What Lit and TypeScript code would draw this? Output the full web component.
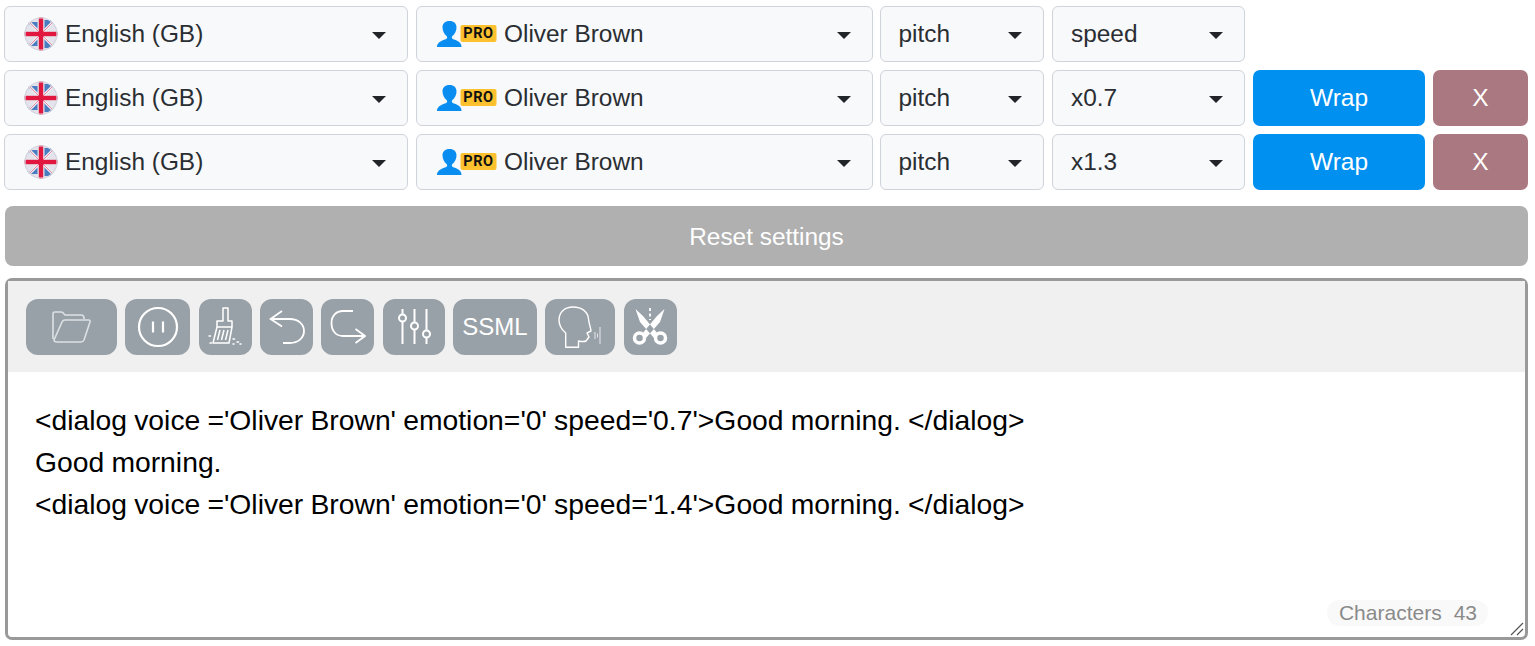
import { LitElement, html, css, svg } from "lit";
import { customElement } from "lit/decorators.js";

const flag = svg`<svg class="flag" viewBox="0 0 34 34" width="34" height="34">
  <defs><clipPath id="c"><circle cx="17" cy="17" r="16.5"/></clipPath></defs>
  <g clip-path="url(#c)">
    <rect width="34" height="34" fill="#e4e2ea"/>
    <path d="M2 5 L13.500 5 L13.500 14 Z M20.500 3 L31 3 L20.500 14 Z M2 29 L13.500 29 L13.500 20 Z M20.500 31 L31 31 L20.500 20 Z" fill="#4a7cc0"/>
    <path d="M2 2 L32 32 M32 2 L2 32" stroke="#f1edf2" stroke-width="3"/>
    <path d="M4 4 L30 30 M30 4 L4 30" stroke="#e48aa0" stroke-width="1"/>
    <rect x="14.800" width="4.400" height="34" fill="#e2173f"/>
    <rect y="14.800" width="34" height="4.400" fill="#e2173f"/>
  </g>
  <circle cx="17" cy="17" r="16" fill="none" stroke="#d4d5e0" stroke-width="1.200"/></svg>`;

const pro = svg`<svg class="pro" viewBox="0 0 60 26" width="60" height="26">
  <path d="M0 26 C0 22 3.500 20 8 18.500 C10 17.800 10.500 16.800 10 15.500 C7 13 5.500 9.500 5.500 6.500 C5.500 2.500 8 0 12.500 0 C17 0 19.500 2.500 19.500 6.500 C19.500 9.500 18 13 15 15.500 C14.500 16.800 15 17.800 17 18.500 C21.500 20 24.500 22 24.500 26 Z" fill="#0a8df0"/>
  <rect x="23.500" y="4" width="36" height="17" rx="2" fill="#fdc02f"/>
</svg>`;

const icons = {
  folder: svg`<svg viewBox="0 0 42 36" width="42" height="36" fill="none" stroke="#dde1e4" stroke-width="1.600" stroke-linejoin="round"><path d="M2 30 V5 Q2 3 4 3 H10 Q12 3 13 5 L14 6 H30 Q33 6 33 9 V10"/><path d="M6 33 H30 Q32 33 33 31 L39 13 Q39.500 11 37.500 11 H14 Q12 11 11 13 L3 31 Q3 33 6 33 Z"/></svg>`,
  pause: svg`<svg viewBox="0 0 42 42" width="42" height="42" fill="none" stroke="#fff" stroke-width="2.200"><circle cx="21" cy="21" r="19"/><path d="M16 15.500 V26.500 M26 15.500 V26.500"/></svg>`,
  broom: svg`<svg viewBox="0 0 34 40" width="34" height="40" fill="none" stroke="#fff" stroke-width="1.500" stroke-linejoin="round"><path d="M15 1 H20 V14 H24 V20 L21 36 H5 L9 20 V14 H15 Z"/><path d="M9 20 H24 M12 23 L9.500 33 M16 23 L13.500 33 M20 23 L17.500 33"/><path d="M1 29 h1.500 M2 36 h1.500 M25 32 h1.500 M29 35 h1.500 M32 37 h1 M25 37 h1" stroke-linecap="round"/></svg>`,
  undo: svg`<svg viewBox="0 0 36 36" width="36" height="36" fill="none" stroke="#fff" stroke-width="1.800"><path d="M13 2 L1.500 10 L13 17.500 M1.500 10 H21 C29 10 35 15 35 22 C35 29 29 34 21 34 H14"/></svg>`,
  redo: svg`<svg viewBox="0 0 36 36" width="36" height="36" fill="none" stroke="#fff" stroke-width="1.800"><path d="M25.500 20 L35 27 L25.500 34 M35 27 H13 C6 27 1.500 22 1.500 14 C1.500 7 6 2 13 2 H23"/></svg>`,
  sliders: svg`<svg viewBox="0 0 36 38" width="36" height="38" fill="none" stroke="#fff" stroke-width="2"><path d="M6.500 1 V6.500 M6.500 13.500 V36 M18.500 1 V14.500 M18.500 21.500 V36 M30.500 1 V22.500 M30.500 29.500 V36"/><circle cx="6.500" cy="10" r="3.500"/><circle cx="18.500" cy="18" r="3.500"/><circle cx="30.500" cy="26" r="3.500"/></svg>`,
  head: svg`<svg viewBox="0 0 44 42" width="44" height="42" fill="none" stroke="#fff" stroke-width="1.400" stroke-linejoin="round"><path d="M7.700 41.300 V27 C3 23 1 19 1 14 C1 6 7 1 15 1 C24 1 30 6 30.500 13 C30.800 17 33 23 33 25 L29 27 L31 31 L28 35 C26 36 23 35.500 20.500 35 V41.300 Z"/><path d="M37 26 V33 M42 21 V38" stroke-width="1.100" stroke="#dfe3e6"/><path d="M39.500 27.500 V31.500" stroke-width="1" stroke="#dfe3e6"/></svg>`,
  scissors: svg`<svg viewBox="0 0 36 38" width="36" height="38" fill="none" stroke="#fff"><path d="M3.500 1 L11 8 L26 26 L22 30 L8 14 Z M32.500 1 L25 8 L10 26 L14 30 L28 14 Z" fill="#fff" stroke="none"/><circle cx="7.500" cy="30" r="5" stroke-width="3.500"/><circle cx="28.500" cy="30" r="5" stroke-width="3.500"/><path d="M18 0 V12" stroke-width="1.800" stroke-dasharray="3 2.500"/></svg>`,
};

@customElement("app-root")
export class AppRoot extends LitElement {
  static styles = css`
    :host { display: block; width: 1535px; height: 646px; background: #fff; font-family: "Liberation Sans", Arial, sans-serif; overflow: hidden; }
    .page { padding: 6px 7px 0 4px; display: flex; flex-direction: column; }
    .rows { display: flex; flex-direction: column; gap: 8px; }
    .row { display: flex; gap: 8px; height: 56px; }
    .sel { box-sizing: border-box; height: 56px; background: #f8f9fa; border: 1px solid #ced4da; border-radius: 6px; display: flex; align-items: center; padding-left: 19px; font-size: 24.400px; color: #2a2e33; position: relative; flex: none; }
    .sel::after { content: ""; position: absolute; top: 25px; right: 21px; border-left: 7.500px solid transparent; border-right: 7.500px solid transparent; border-top: 7px solid #212529; }
    .w1 { width: 404px; }
    .w2 { width: 457px; }
    .w3 { width: 164px; margin-left: -1px; padding-left: 17.500px; }
    .w4 { width: 193px; padding-left: 18px; }
    .lang { padding-left: 19px; gap: 7px; }
    .voice { gap: 7px; padding-left: 20px; }
    .flag { flex: none; filter: blur(0.4px); }
    .pro-wrap { position: relative; display: block; width: 60px; height: 26px; flex: none; }
    .pro { display: block; }
    .pro-text { position: absolute; left: 24px; top: 4.500px; width: 35px; text-align: center; font: 700 14.500px/16px "Roboto", sans-serif; letter-spacing: 0.600px; color: #111; }
    .btn { box-sizing: border-box; height: 56px; border-radius: 7px; display: flex; align-items: center; justify-content: center; color: #fff; font-size: 24.500px; flex: none; }
    .wrap { width: 172px; background: #0090f0; }
    .x { width: 95px; background: #aa7880; }
    .reset { box-sizing: border-box; margin: 16px 0 0 1px; height: 60px; padding-top: 2px; background: #b0b0b0; border-radius: 8px; color: #fff; font-size: 24.400px; display: flex; align-items: center; justify-content: center; }
    .editor { box-sizing: border-box; margin: 12px 0 0 1px; height: 362px; border: 3px solid #999; border-radius: 7px; display: flex; flex-direction: column; position: relative; }
    .toolbar { background: #f0f0f0; height: 91px; box-sizing: border-box; padding: 18px 18px 0; display: flex; gap: 8.400px; flex: none; }
    .tool { box-sizing: border-box; height: 56px; background: #99a1a8; border-radius: 12px; display: flex; align-items: center; justify-content: center; color: #fff; font-size: 24px; flex: none; }
    .text { padding: 27px 27px 0; font-size: 28.300px; word-spacing: -0.700px; line-height: 42px; color: #000; }
    .count { position: absolute; right: 37px; bottom: 11px; height: 26px; padding: 0 11px 0 12px; border-radius: 13px; background: #f9f9f9; color: #8a8a8a; font-size: 21px; display: flex; align-items: center; gap: 12px; }
    .grip { position: absolute; right: 1px; bottom: 1px; }
  `;

  sel(cls: string, inner: unknown) {
    return html`<div class="sel ${cls}">${inner}</div>`;
  }

  row(speed: string, buttons: boolean) {
    return html`<div class="row">
      <div class="sel w1 lang">${flag}<span>English (GB)</span></div>
      <div class="sel w2 voice"><span class="pro-wrap">${pro}<span class="pro-text">PRO</span></span><span>Oliver Brown</span></div>
      ${this.sel("w3", "pitch")}
      ${this.sel("w4", speed)}
      ${buttons ? html`<div class="btn wrap">Wrap</div><div class="btn x">X</div>` : ""}
    </div>`;
  }

  render() {
    const tools: [number, unknown][] = [
      [91, icons.folder], [65, icons.pause], [53, icons.broom], [52.8, icons.undo], [52.8, icons.redo],
      [62, icons.sliders], [84, "SSML"], [70, icons.head], [53, icons.scissors],
    ];
    return html`<div class="page">
      <div class="rows">
        ${this.row("speed", false)}
        ${this.row("x0.7", true)}
        ${this.row("x1.3", true)}
      </div>
      <div class="reset">Reset settings</div>
      <div class="editor">
        <div class="toolbar">
          ${tools.map(([w, c]) => html`<div class="tool" style="width:${w}px">${c}</div>`)}
        </div>
        <div class="text">
          <div>&lt;dialog voice ='Oliver Brown' emotion='0' speed='0.7'&gt;Good morning. &lt;/dialog&gt;</div>
          <div>Good morning.</div>
          <div>&lt;dialog voice ='Oliver Brown' emotion='0' speed='1.4'&gt;Good morning. &lt;/dialog&gt;</div>
        </div>
        <div class="count"><span>Characters</span><span>43</span></div>
        <svg class="grip" viewBox="0 0 14 14" width="14" height="14" fill="none" stroke="#555" stroke-width="1.200"><path d="M1 13 L13 1 M7 13 L13 7"/></svg>
      </div>
    </div>`;
  }
}
